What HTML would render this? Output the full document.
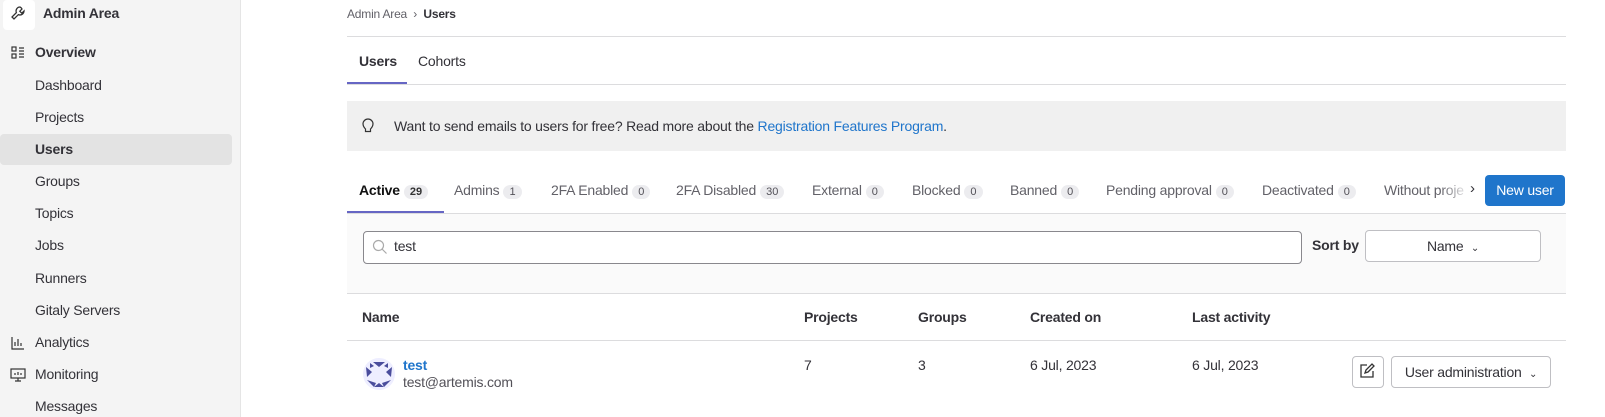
<!DOCTYPE html><html><head><style>
body{margin:0;width:1605px;height:417px;overflow:hidden;font-family:"Liberation Sans",sans-serif;font-size:14px;letter-spacing:-0.2px;color:#333238;background:#fff;position:relative}
.a{position:absolute;white-space:nowrap}
.sb{position:absolute;left:0;top:0;width:240px;height:417px;background:#f4f4f4;border-right:1px solid #e5e5e5}
.b{font-weight:bold}
.badge{display:inline-block;background:#ececef;border-radius:9px;font-size:11px;padding:1px 6px;margin-left:4px;color:#535158;letter-spacing:0}
.tab{position:absolute;top:182px;color:#626168}
</style></head><body>
<div class="sb">
<div class="a" style="left:3px;top:0;width:32px;height:30px;background:#fff;border-radius:4px"></div>
<svg class="a" style="left:10px;top:5px" width="16" height="16" viewBox="0 0 16 16"><path d="M10 2a4 4 0 0 0-3.6 5.6L2 12l2 2 4.4-4.4A4 4 0 0 0 14 6l-2.2 2.2-2-2L12 4A4 4 0 0 0 10 2z" fill="none" stroke="#333" stroke-width="1.3"/></svg>
<div class="a b" style="left:43px;top:5px">Admin Area</div>
<svg class="a" style="left:11px;top:46px" width="14" height="14" viewBox="0 0 14 14" fill="none" stroke="#333" stroke-width="1.2"><rect x="1" y="1" width="4" height="4"/><rect x="1" y="8" width="4" height="4"/><path d="M8 2h5M8 5h5M8 8h5M8 11h5"/></svg>
<div class="a b" style="left:35px;top:44px">Overview</div>
<div class="a" style="left:0;top:134px;width:232px;height:31px;background:#e3e3e3;border-radius:4px"></div>
<div class="a" style="left:35px;top:77px">Dashboard</div>
<div class="a" style="left:35px;top:109px">Projects</div>
<div class="a b" style="left:35px;top:141px">Users</div>
<div class="a" style="left:35px;top:173px">Groups</div>
<div class="a" style="left:35px;top:205px">Topics</div>
<div class="a" style="left:35px;top:237px">Jobs</div>
<div class="a" style="left:35px;top:270px">Runners</div>
<div class="a" style="left:35px;top:302px">Gitaly Servers</div>
<svg class="a" style="left:11px;top:336px" width="14" height="14" viewBox="0 0 14 14" fill="none" stroke="#333" stroke-width="1.2"><path d="M1 1v12h12M4 10V6M7 10V3M10 10V7"/></svg>
<div class="a" style="left:35px;top:334px">Analytics</div>
<svg class="a" style="left:10px;top:368px" width="16" height="14" viewBox="0 0 16 14" fill="none" stroke="#333" stroke-width="1.2"><rect x="1" y="1" width="14" height="9"/><path d="M8 10v3M5 13h6M5 7V5M8 7V4M11 7V5"/></svg>
<div class="a" style="left:35px;top:366px">Monitoring</div>
<div class="a" style="left:35px;top:398px">Messages</div>
</div>
<div class="a" style="left:347px;top:7px;font-size:12px;color:#626168">Admin Area &nbsp;›&nbsp; <b style="color:#333238">Users</b></div>
<div class="a" style="left:347px;top:36px;width:1219px;height:1px;background:#dcdcde"></div>
<div class="a b" style="left:359px;top:53px">Users</div>
<div class="a" style="left:418px;top:53px">Cohorts</div>
<div class="a" style="left:347px;top:82px;width:60px;height:2px;background:#6666c4"></div>
<div class="a" style="left:347px;top:84px;width:1219px;height:1px;background:#dcdcde"></div>
<div class="a" style="left:347px;top:101px;width:1219px;height:50px;background:#f0f0f0"></div>
<svg class="a" style="left:362px;top:118px" width="12" height="16" viewBox="0 0 12 16" fill="none" stroke="#333" stroke-width="1.2"><path d="M3.5 11C2 9.5 1 8 1 6a5 5 0 0 1 10 0c0 2-1 3.5-2.5 5v2.5h-5z"/></svg>
<div class="a" style="left:394px;top:118px">Want to send emails to users for free? Read more about the <span style="color:#1f75cb">Registration Features Program</span>.</div>
<div class="a b" style="left:359px;top:182px;color:#111">Active<span class="badge" style="font-weight:bold;color:#333">29</span></div>
<div class="tab" style="left:454px">Admins<span class="badge">1</span></div>
<div class="tab" style="left:551px">2FA Enabled<span class="badge">0</span></div>
<div class="tab" style="left:676px">2FA Disabled<span class="badge">30</span></div>
<div class="tab" style="left:812px">External<span class="badge">0</span></div>
<div class="tab" style="left:912px">Blocked<span class="badge">0</span></div>
<div class="tab" style="left:1010px">Banned<span class="badge">0</span></div>
<div class="tab" style="left:1106px">Pending approval<span class="badge">0</span></div>
<div class="tab" style="left:1262px">Deactivated<span class="badge">0</span></div>
<div class="tab" style="left:1384px">Without proje</div>
<div class="a" style="left:1440px;top:176px;width:30px;height:30px;background:linear-gradient(90deg,rgba(255,255,255,0),#fff)"></div>
<div class="a" style="left:1470px;top:180px;font-size:15px">›</div>
<div class="a" style="left:1485px;top:175px;width:80px;height:31px;background:#1f75cb;border-radius:4px;color:#fff;text-align:center;line-height:31px">New user</div>
<div class="a" style="left:347px;top:211px;width:97px;height:2px;background:#6666c4"></div>
<div class="a" style="left:347px;top:213px;width:1219px;height:79px;background:#fafafa;border-top:1px solid #dcdcde;border-bottom:1px solid #dcdcde"></div>
<div class="a" style="left:363px;top:231px;width:937px;height:31px;border:1px solid #89888d;border-radius:4px;background:#fff"></div>
<svg class="a" style="left:372px;top:239px" width="16" height="16" viewBox="0 0 16 16" fill="none" stroke="#aaa" stroke-width="1.2"><circle cx="6.5" cy="6.5" r="5"/><path d="M10 10l4.5 4.5"/></svg>
<div class="a" style="left:394px;top:238px">test</div>
<div class="a b" style="left:1312px;top:237px">Sort by</div>
<div class="a" style="left:1365px;top:230px;width:174px;height:30px;border:1px solid #bfbfc3;border-radius:4px;background:#fff;text-align:center;line-height:30px">Name &nbsp;<span style="font-size:10px">⌄</span></div>
<div class="a b" style="left:362px;top:309px">Name</div>
<div class="a b" style="left:804px;top:309px">Projects</div>
<div class="a b" style="left:918px;top:309px">Groups</div>
<div class="a b" style="left:1030px;top:309px">Created on</div>
<div class="a b" style="left:1192px;top:309px">Last activity</div>
<div class="a" style="left:347px;top:340px;width:1219px;height:1px;background:#dcdcde"></div>
<svg class="a" style="left:363px;top:358px" width="32" height="32" viewBox="0 0 32 32"><circle cx="16" cy="16" r="16" fill="#eef"/><g fill="#4a4d9c"><path d="M10 3l6 5 6-5z" transform="translate(0,1)"/><path d="M3 9l1 10 5-5zM29 9l-1 10-5-5z"/><path d="M4 22l7 7 2-4zM28 22l-7 7-2-4z"/><path d="M11 29h10l-5-4z"/><path d="M7 5l4 3-4 2zM25 5l-4 3 4 2z"/></g></svg>
<div class="a b" style="left:403px;top:357px;color:#1f75cb">test</div>
<div class="a" style="left:403px;top:374px;color:#535158">test@artemis.com</div>
<div class="a" style="left:804px;top:357px">7</div>
<div class="a" style="left:918px;top:357px">3</div>
<div class="a" style="left:1030px;top:357px">6 Jul, 2023</div>
<div class="a" style="left:1192px;top:357px">6 Jul, 2023</div>
<div class="a" style="left:1352px;top:356px;width:30px;height:30px;border:1px solid #bfbfc3;border-radius:4px"></div>
<svg class="a" style="left:1359px;top:363px" width="16" height="16" viewBox="0 0 16 16" fill="none" stroke="#333" stroke-width="1.3"><path d="M8 2H2v12h12V8M6 10l1-3 6-6 2 2-6 6z"/></svg>
<div class="a" style="left:1391px;top:356px;width:158px;height:30px;border:1px solid #bfbfc3;border-radius:4px;line-height:30px;text-align:center">User administration &nbsp;<span style="font-size:10px">⌄</span></div>
</body></html>
